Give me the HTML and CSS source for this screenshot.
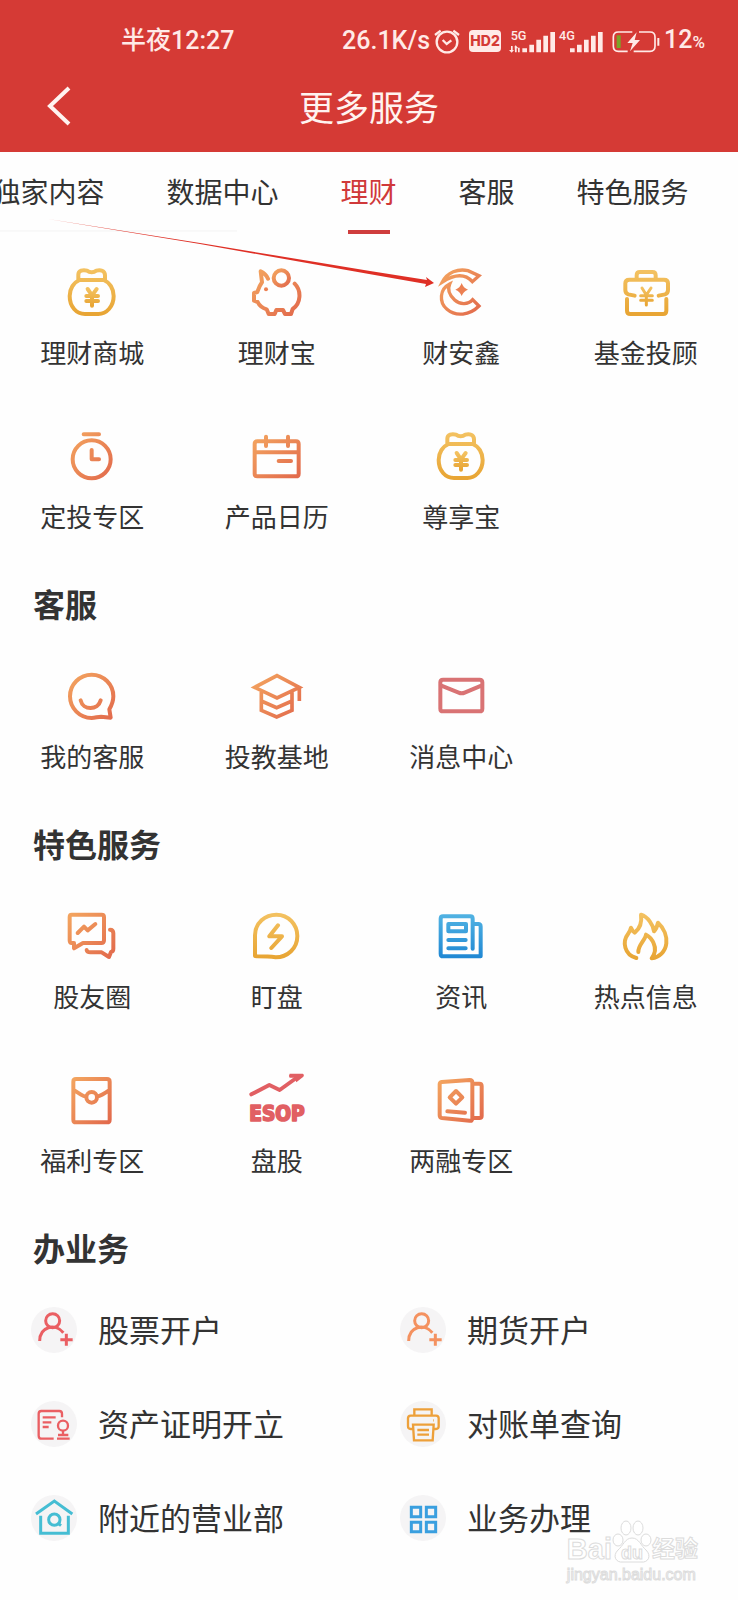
FILE: index.html
```html
<!DOCTYPE html>
<html lang="zh-CN">
<head>
<meta charset="utf-8">
<meta name="viewport" content="width=device-width, initial-scale=1">
<title>更多服务</title>
<link rel="stylesheet" href="styles.css">
</head>
<body>
<svg class="defs" width="0" height="0" aria-hidden="true">
  <defs>
    <linearGradient id="gold" x1="0" y1="0" x2="0" y2="1"><stop offset="0" stop-color="#f3c160"/><stop offset="1" stop-color="#e8a534"/></linearGradient>
    <linearGradient id="orange" x1="0" y1="0" x2="1" y2="1"><stop offset="0" stop-color="#f3a45f"/><stop offset="1" stop-color="#e26a4c"/></linearGradient>
    <linearGradient id="blue" x1="0" y1="0" x2="0" y2="1"><stop offset="0" stop-color="#4fb1e2"/><stop offset="1" stop-color="#2189d4"/></linearGradient>
    <symbol id="bag" viewBox="187 66 180 180">
      <path d="M240 120H312C330 127 342 146 342 168C342 200 320 222 296 222H256C230 222 210 200 210 168C210 146 222 127 240 120ZM236 120V104C236 92 250 88 262 92C270 98 282 98 290 92C302 88 316 92 316 106V120"/>
      <path class="thin" d="M264 147L277 166L291 147M277 166V197M260 168H295M260 183H295"/>
    </symbol>
    <symbol id="person" viewBox="93 261 138 138">
      <circle cx="158" cy="302" r="21"/>
      <path d="M119 363C119 320 165 308 190 338M181 359H218M199 341V377"/>
    </symbol>
  </defs>
</svg>

<div class="page">
  <header class="header">
    <div class="status">
      <span>半夜12:27</span>
      <div class="status-right">
        <span>26.1K/s</span>
        <svg class="alarm" viewBox="316 80 84 78" aria-hidden="true"><circle cx="358" cy="122" r="31"/><path d="M345 116L357 128L371 117M322 101L339 88M377 88L394 101"/></svg>
        <span class="hd">HD2</span>
        <svg class="signal" viewBox="540 80 141 78" aria-hidden="true"><text x="545" y="117">5G</text><path d="M580 141h14v12h-14zM601 130h14v23h-14zM622 115h14v38h-14zM643 103h14v50h-14zM664 92h14v61h-14zM546 134h5v12h4l-7 8l-8-8h6zM558 153h5v-12h5l-8-9v0l-3 3zM567 153h5v-14h-5z"/></svg>
        <svg class="signal" viewBox="687 80 141 78" aria-hidden="true"><text x="690" y="117">4G</text><path d="M723 141h14v12h-14zM744 130h14v23h-14zM765 115h14v38h-14zM786 103h14v50h-14zM807 92h14v61h-14z"/></svg>
        <svg class="battery" viewBox="847 83 147 75" aria-hidden="true"><path class="shell" d="M894 150H866Q851 150 851 135V107Q851 92 866 92H908M928 92H961Q976 92 976 107V135Q976 150 961 150H912"/><rect class="level" x="861" y="102" width="12" height="38"/><path class="flash" d="M921 93L893 125H909L901 150L931 116H915ZM983 110h6v23h-6z"/></svg>
        <span>12<small>%</small></span>
      </div>
    </div>
    <div class="titlebar">
      <button class="back" type="button" aria-label="返回"><svg viewBox="0 0 24 40"><path d="M22 2L3 20L22 38"/></svg></button>
      <h1>更多服务</h1>
    </div>
  </header>

  <nav class="tabs" aria-label="服务分类">
    <a href="#exclusive">独家内容</a>
    <a href="#data">数据中心</a>
    <a href="#wealth" class="active" aria-current="true">理财</a>
    <a href="#support">客服</a>
    <a href="#special">特色服务</a>
  </nav>

  <main>
    <section class="grid" id="wealth" aria-label="理财">
      <a href="#"><svg class="icon gold"><use href="#bag"/></svg>理财商城</a>
      <a href="#"><svg class="icon orange" viewBox="740 66 180 180"><circle cx="843" cy="114" r="23"/><path d="M803 116C797 102 790 98 781 94L785 127C778 136 774 148 771 156L761 159V182L772 186C777 197 785 204 799 208L805 222H823L828 210H848L854 222H872L877 207C902 190 904 152 883 131"/><circle class="dot" cx="797" cy="148" r="6"/></svg>理财宝</a>
      <a href="#"><svg class="icon orange" viewBox="187 66 180 180"><path class="mid" d="M221 126C236 97 268 85 298 92L331 107L311 125C292 104 262 100 221 126ZM243 132C213 147 210 186 235 208C262 231 303 226 331 198L312 179C299 194 274 195 258 180C243 166 236 148 243 132Z"/><path class="dot" d="M279 129Q284 144 298 149Q284 154 279 168Q274 154 260 149Q274 144 279 129Z"/></svg>财安鑫</a>
      <a href="#"><svg class="icon gold" viewBox="740 66 180 180"><path d="M802 118V106Q802 96 812 96H849Q859 96 859 106V118M796 167L777 163Q768 160 768 150V130Q768 119 780 119H884Q896 119 896 130V150Q896 160 887 163L868 167M773 177V212Q773 222 783 222H881Q891 222 891 212V177"/><path class="thin" d="M818 144L831 165L845 144M831 165V195M814 167H849M814 181H849"/></svg>基金投顾</a>
      <a href="#"><svg class="icon orange" viewBox="187 558 180 180"><path d="M252 583H298M333 658A57 57 0 1 1 219 658A57 57 0 1 1 333 658ZM276 630V658H298"/></svg>定投专区</a>
      <a href="#"><svg class="icon orange" viewBox="740 558 180 180"><path d="M771 604H887Q895 604 895 612V701Q895 709 887 709H771Q763 709 763 701V612Q763 604 771 604ZM763 637H895M797 590V618M863 590V618M835 663H872"/></svg>产品日历</a>
      <a href="#"><svg class="icon gold"><use href="#bag"/></svg>尊享宝</a>
    </section>

    <h2>客服</h2>
    <section class="grid" id="support" aria-label="客服">
      <a href="#"><svg class="icon orange" viewBox="187 258 180 180"><path d="M329 388C336 376 341 363 341 349A65 65 0 1 0 276 414C286 414 295 410 304 410L333 413L329 388M243 361C250 392 295 392 303 361"/></svg>我的客服</a>
      <a href="#"><svg class="icon orange sharp" viewBox="740 258 180 180"><path d="M830 287L897 322L830 354L763 322ZM897 322V363M783 336V391L829 411L875 391V336M783 363L829 383L875 363"/></svg>投教基地</a>
      <a href="#"><svg class="icon rose" viewBox="187 78 180 180"><path d="M223 119H333Q341 119 341 127V206Q341 214 333 214H223Q215 214 215 206V127Q215 119 223 119ZM218 137L270 158Q279 162 288 158L338 137"/></svg>消息中心</a>
    </section>

    <h2>特色服务</h2>
    <section class="grid" id="special" aria-label="特色服务">
      <a href="#"><svg class="icon orange" viewBox="187 48 180 180"><path d="M216 74H306Q313 74 313 81V151Q313 159 305 159H250L223 175V159H216Q210 159 210 151V81Q210 74 216 74ZM234 129L253 110L264 121L287 102M331 119Q341 119 341 130V176Q341 184 334 186L328 201L306 187H272Q262 187 261 180"/></svg>股友圈</a>
      <a href="#"><svg class="icon gold" viewBox="740 48 180 180"><path d="M764 198V136C764 98 795 74 828 74C865 74 891 104 891 138C891 175 862 202 826 202C812 200 790 199 770 199ZM833 106L807 139H845L813 174"/></svg>盯盘</a>
      <a href="#"><svg class="icon blue" viewBox="187 48 180 180"><path d="M312 176V86Q312 79 305 79H223Q216 79 216 86V191Q216 199 223 199H336V110Q336 102 329 102H313M239 102H292V124H239ZM239 150H291M239 175H291"/></svg>资讯</a>
      <a href="#"><svg class="icon gold" viewBox="740 48 180 180"><path d="M801 204C765 195 758 155 776 132C781 125 784 119 785 113C788 120 790 124 796 128C812 115 818 95 815 74C835 80 852 105 854 124C860 118 864 108 866 98C885 115 893 140 891 160C888 185 870 202 847 205C858 190 860 175 853 160C848 148 842 140 830 134C828 150 806 165 807 186"/></svg>热点信息</a>
      <a href="#"><svg class="icon orange" viewBox="187 540 180 180"><path d="M229 567H322Q330 567 330 575V689Q330 697 322 697H229Q221 697 221 689V575Q221 567 229 567ZM224 601L244 614Q252 619 260 620M292 620Q305 617 328 601M292 622A16 16 0 1 1 260 622A16 16 0 1 1 292 622Z"/></svg>福利专区</a>
      <a href="#"><svg class="icon esop" viewBox="740 540 180 180"><path d="M753 613L807 585L838 600L892 561"/><path class="dot" d="M868 551H907Q913 554 909 560L888 577L882 563H868Q864 557 868 551Z"/><text x="830" y="694" text-anchor="middle">ESOP</text></svg>盘股</a>
      <a href="#"><svg class="icon orange" viewBox="187 540 180 180"><path d="M219 576L303 570Q311 570 311 578V685Q311 694 303 692L220 684Q213 683 213 676V583Q213 577 219 576ZM311 581H332Q339 581 339 588V678Q339 684 332 684H311M262 603L281 622L262 641L243 622ZM236 664L289 668"/></svg>两融专区</a>
    </section>

    <h2>办业务</h2>
    <section class="business" aria-label="办业务">
      <a href="#"><svg class="round red"><use href="#person"/></svg>股票开户</a>
      <a href="#"><svg class="round coral"><use href="#person"/></svg>期货开户</a>
      <a href="#"><svg class="round red fine" viewBox="93 543 138 138"><path d="M161 656H125Q116 656 116 647V581Q116 573 124 573H178Q186 573 186 581V592M128 592H167M128 607H154M128 621H146M189 632V645M174 645H205M171 656H209"/><circle cx="189" cy="617" r="15"/></svg>资产证明开立</a>
      <a href="#"><svg class="round amber fine" viewBox="93 333 138 138"><path d="M136 376V358H188V376M132 417H125Q117 417 117 409V385Q117 377 125 377H201Q209 377 209 385V409Q209 417 201 417H194M132 404H194L191 451H135ZM145 420H180M145 434H180M193 391H195"/></svg>对账单查询</a>
      <a href="#"><svg class="round cyan" viewBox="93 825 138 138"><path d="M108 882L163 843L217 882M122 887V940H205V887M174 910L183 917"/><circle cx="163" cy="899" r="17"/></svg>附近的营业部</a>
      <a href="#"><svg class="round sky" viewBox="93 615 138 138"><path d="M127 652H155V680H127ZM172 652H200V680H172ZM127 697H155V725H127ZM172 697H200V725H172Z"/></svg>业务办理</a>
    </section>
  </main>

  <svg class="pointer" viewBox="0 0 440 80" aria-hidden="true"><path class="rule" d="M0 21H237"/><path class="arrow" d="M48 9L200 33L370 61L427 70L426 67L434 73L425 77L426 74L369 64L200 34Z"/></svg>

  <div class="watermark" aria-hidden="true">
    <div class="brand"><span>Bai</span><svg viewBox="0 0 40 44"><ellipse cx="6" cy="20" rx="5" ry="6"/><ellipse cx="14" cy="8" rx="5" ry="7"/><ellipse cx="26" cy="8" rx="5" ry="7"/><ellipse cx="34" cy="20" rx="5" ry="6"/><path d="M20 18C13 18 11 26 6 30C0 36 4 43 11 42H29C36 43 40 36 34 30C29 26 27 18 20 18Z"/><text x="20" y="39" text-anchor="middle">du</text></svg><span class="cn">经验</span></div>
    <div class="site">jingyan.baidu.com</div>
  </div>
</div>
</body>
</html>
```

FILE: styles.css
```css
* { box-sizing: border-box; }

body {
  margin: 0;
  background: #fefefe;
  color: #333;
  font-family: "Noto Sans CJK SC", sans-serif;
}

a { color: inherit; text-decoration: none; }

.defs { position: absolute; }

.page {
  position: relative;
  min-height: 100vh;
  padding-bottom: 56px;
  overflow: hidden;
}

/* Header */
.header { background: #d53a35; color: #ffeae7; }

.status {
  display: flex;
  justify-content: space-between;
  align-items: center;
  height: 60px;
  padding: 22px 33px 0 121px;
  font: 500 25px/38px Roboto, "Noto Sans CJK SC", sans-serif;
}

.status-right { display: flex; align-items: center; }
.status small { font-size: 17px; }
.status svg { fill: none; stroke: #ffeae7; }

.alarm { width: 28px; height: 26px; margin-left: 3px; stroke-width: 7; }

.hd {
  width: 32px;
  margin: 0 8px;
  border-radius: 4px;
  background: #ffeae7;
  color: #d53a35;
  font: 800 14px/22px Inter, sans-serif;
  text-align: center;
}

.status .signal { width: 47px; height: 26px; margin-right: 2px; fill: #ffeae7; stroke: none; }
.signal text { font: 500 38px Roboto, sans-serif; }

.battery { width: 49px; height: 25px; margin: 0 3px 0 5px; }
.battery .shell { stroke-width: 5; }
.battery .level { fill: #7ba428; stroke: none; }
.battery .flash { fill: #ffeae7; stroke: none; }

.titlebar {
  display: grid;
  grid-template-columns: 1fr auto 1fr;
  align-items: center;
  height: 92px;
}

.back {
  justify-self: start;
  margin-left: 39px;
  padding: 8px;
  border: 0;
  background: none;
}

.back svg {
  display: block;
  width: 24px;
  height: 40px;
  fill: none;
  stroke: #fff3f0;
  stroke-width: 4;
}

h1 { margin: 0; color: #fff3f0; font-size: 35px; font-weight: 400; line-height: 48px; }

/* Tabs */
.tabs {
  display: flex;
  justify-content: center;
  gap: 62px;
  height: 82px;
  padding: 19px 57px 0 0;
  font-size: 28px;
  line-height: 40px;
  white-space: nowrap;
}

.tabs a { display: flex; flex: none; flex-direction: column; justify-content: space-between; align-items: center; }
.tabs .active { color: #d0393a; }
.tabs .active::after { content: ""; width: 42px; height: 4px; background: #cf3d3d; }

/* Service grids */
.grid { display: grid; grid-template-columns: repeat(4, 1fr); row-gap: 59px; }
#wealth { margin-top: 28px; }

.grid a {
  display: flex;
  flex-direction: column;
  align-items: center;
  gap: 15px;
  font-size: 26px;
  line-height: 30px;
}

h2 { margin: 52px 0 43px 33px; font-size: 32px; font-weight: 700; line-height: 40px; }

.icon {
  width: 60px;
  height: 60px;
  fill: none;
  stroke-width: 12;
  stroke-linecap: round;
  stroke-linejoin: round;
}

.icon .thin { stroke-width: 9; }
.icon .mid { stroke-width: 10; stroke-linejoin: miter; }
.icon .dot { stroke: none; }
.gold { stroke: url(#gold); }
.orange { stroke: url(#orange); }
.orange .dot { fill: #ec8052; }
.blue { stroke: url(#blue); }
.rose { stroke: #d97374; }
.sharp { stroke-width: 11; stroke-linecap: butt; stroke-linejoin: miter; }
.esop { stroke: #e15f63; }
.esop .dot { fill: #e15f63; }

.esop text {
  fill: #e15f63;
  stroke-width: 5;
  font: 700 62px "DejaVu Sans Condensed", sans-serif;
}

/* Business list */
.business {
  display: grid;
  grid-template-columns: 1fr 1fr;
  row-gap: 48px;
  margin-top: -3px;
}

.business a {
  display: flex;
  align-items: flex-start;
  gap: 21px;
  padding-left: 31px;
  font-size: 31px;
  line-height: 44px;
}

.round {
  flex: none;
  width: 46px;
  height: 46px;
  border-radius: 50%;
  background: #f5f4f5;
  fill: none;
  stroke-width: 9;
  overflow: visible;
}

.fine { stroke-width: 7; }
.red { stroke: #ea5f63; }
.coral { stroke: #f4915f; }
.amber { stroke: #eda03a; }
.cyan { stroke: #45bdd3; }
.sky { stroke: #3a9fdf; }

/* Overlays */
.pointer { position: absolute; top: 210px; left: 0; width: 440px; height: 80px; pointer-events: none; }
.rule { stroke: #f3f3f3; stroke-width: 1; }
.arrow { fill: #df2f25; }

.watermark {
  position: absolute;
  right: 40px;
  bottom: 14px;
  color: #fff;
  font-family: "Liberation Sans", "Noto Sans CJK SC", sans-serif;
  -webkit-text-stroke: 1px #dcdcdc;
}

.brand { display: flex; align-items: flex-end; font-size: 29px; font-weight: 700; line-height: 30px; }
.brand svg { width: 40px; height: 44px; fill: #fff; stroke: #dcdcdc; }
.brand text { font-size: 18px; }
.brand .cn { font-size: 23px; }
.site { font-size: 16px; line-height: 22px; }
```
